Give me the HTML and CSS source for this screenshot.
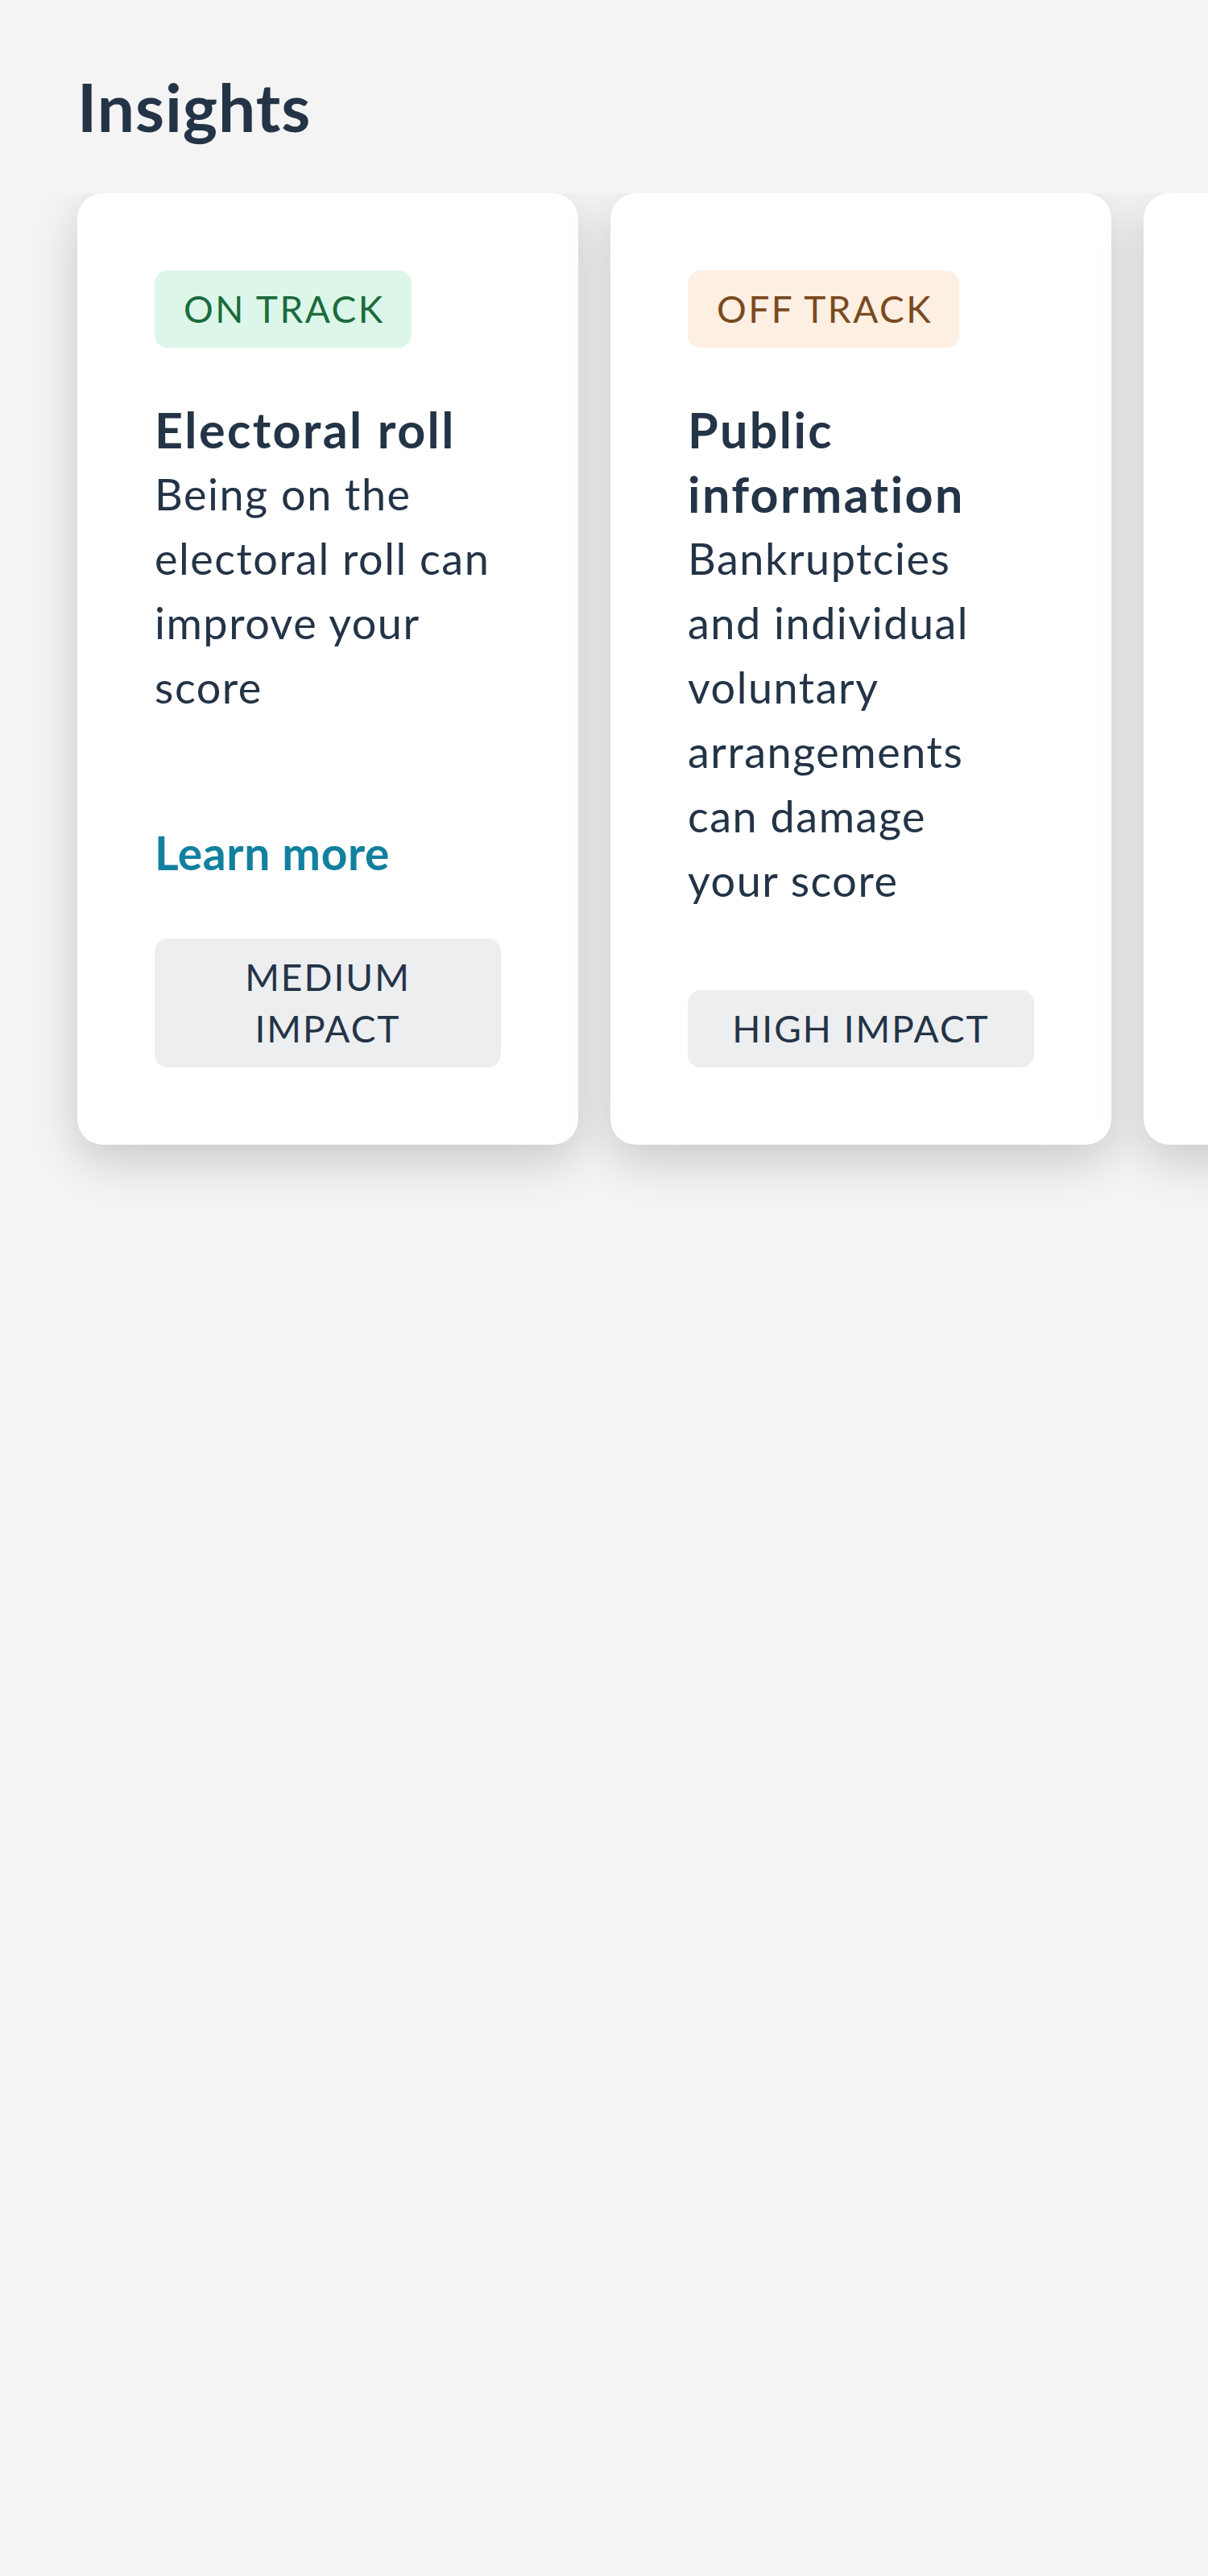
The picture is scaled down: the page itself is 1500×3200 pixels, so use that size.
FILE: index.html
```html
<!DOCTYPE html>
<html lang="en">
<head>
<meta charset="utf-8">
<title>Insights</title>
<link rel="stylesheet" href="styles.css">
</head>
<body>
<main class="page">
  <h1 class="page-title">Insights</h1>
  <div class="cards">
    <article class="card">
      <div class="card-body">
        <span class="status status-on">ON TRACK</span>
        <h2 class="card-title">Electoral roll</h2>
        <p class="card-desc">Being on the electoral roll can improve your score</p>
      </div>
      <div class="card-foot">
        <a class="learn" href="#">Learn more</a>
        <div class="impact">MEDIUM IMPACT</div>
      </div>
    </article>
    <article class="card">
      <div class="card-body">
        <span class="status status-off">OFF TRACK</span>
        <h2 class="card-title">Public information</h2>
        <p class="card-desc">Bankruptcies and individual voluntary arrangements can damage your score</p>
      </div>
      <div class="card-foot">
        <div class="impact">HIGH IMPACT</div>
      </div>
    </article>
    <article class="card card-peek" aria-hidden="true"></article>
  </div>
</main>
</body>
</html>
```

FILE: styles.css
```css
html, body {
  margin: 0;
  padding: 0;
  background: #f4f4f4;
}

body {
  font-family: "Lato", "Liberation Sans", sans-serif;
  color: #243447;
}

.page {
  padding: 82px 0 0 96px;
}

.page-title {
  margin: 0;
  font-size: 82px;
  line-height: 100px;
  font-weight: 700;
  letter-spacing: 1px;
  color: #243447;
}

.cards {
  display: flex;
  gap: 40px;
  margin-top: 58px;
  margin-left: -96px;
  padding: 0 0 120px 96px;
  overflow: hidden;
}

.card {
  flex: 0 0 622px;
  box-sizing: border-box;
  padding: 96px;
  background: #ffffff;
  border-radius: 32px;
  box-shadow: 0 20px 56px rgba(0, 0, 0, 0.18);
  display: flex;
  flex-direction: column;
}

.card-body {
  flex: 1 1 auto;
  display: flex;
  flex-direction: column;
  align-items: flex-start;
}

.status {
  display: inline-block;
  padding: 16px 33px 16px 36px;
  border-radius: 16px;
  font-size: 46px;
  line-height: 64px;
  letter-spacing: 2.5px;
}

.status-on {
  background: #dcf7e9;
  color: #1b6b3c;
}

.status-off {
  background: #fdefe2;
  color: #7a4a1f;
}

.card-title {
  margin: 62px 0 0;
  font-size: 61px;
  line-height: 80px;
  font-weight: 700;
  letter-spacing: 2.4px;
}

.card-desc {
  margin: 0;
  max-width: 420px;
  font-size: 54px;
  line-height: 80px;
  font-weight: 400;
  letter-spacing: 1.5px;
}

.card-foot {
  margin-top: 96px;
  display: flex;
  flex-direction: column;
}

.learn {
  font-size: 57px;
  line-height: 80px;
  font-weight: 700;
  letter-spacing: 0.6px;
  color: #12809f;
  text-decoration: none;
  margin-bottom: 67px;
}

.impact {
  box-sizing: border-box;
  padding: 16px 40px;
  border-radius: 16px;
  background: #edeef0;
  font-size: 46px;
  line-height: 64px;
  letter-spacing: 2px;
  text-align: center;
}
```
